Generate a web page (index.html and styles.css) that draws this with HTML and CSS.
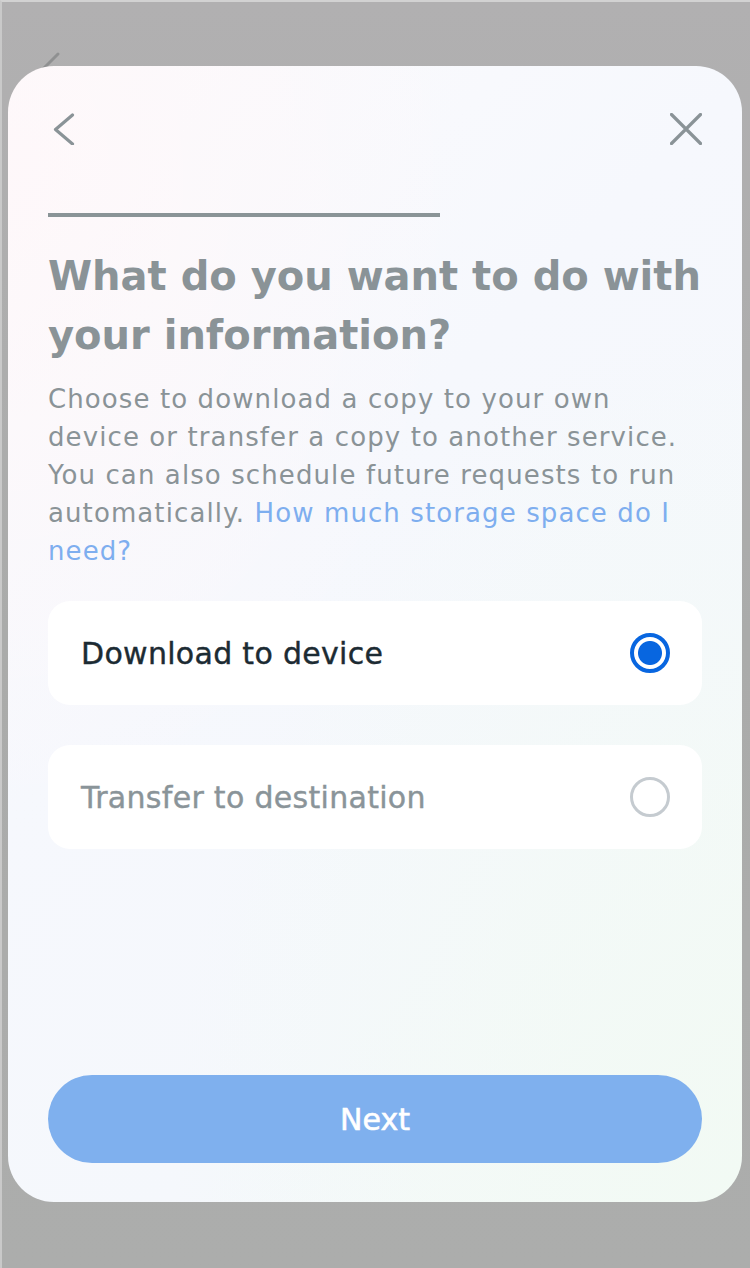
FILE: index.html
```html
<!DOCTYPE html>
<html lang="en">
<head>
<meta charset="utf-8">
<title>What do you want to do with your information?</title>
<link rel="stylesheet" href="styles.css">
</head>
<body>
<div class="backdrop">
  <svg class="under-back" width="40" height="40" viewBox="0 0 40 40" aria-hidden="true">
    <path d="M22 4 L6 20 L22 36" fill="none" stroke="#8f9091" stroke-width="3" stroke-linecap="round" stroke-linejoin="round"/>
  </svg>
  <section class="sheet">
    <header class="sheet-head">
      <button class="icon-btn" aria-label="Back">
        <svg width="32" height="32" viewBox="0 0 32 32">
          <path d="M24.5 2 L7.5 16.5 L24.5 31" fill="none" stroke="#8a9397" stroke-width="3.2" stroke-linecap="round" stroke-linejoin="round"/>
        </svg>
      </button>
      <button class="icon-btn" aria-label="Close">
        <svg width="32" height="32" viewBox="0 0 32 32">
          <path d="M1.5 1.5 L30.5 30.5 M30.5 1.5 L1.5 30.5" fill="none" stroke="#8a9397" stroke-width="3.2" stroke-linecap="round"/>
        </svg>
      </button>
    </header>
    <div class="progress"></div>
    <h1 class="title">What do you want to do with<br>your information?</h1>
    <p class="desc">Choose to download a copy to your own device or transfer a copy to another service. You can also schedule future requests to run automatically. <a class="link" href="#">How much storage space do I need?</a></p>
    <div class="options">
      <div class="option">
        <span class="option-label selected">Download to device</span>
        <span class="radio radio-on"></span>
      </div>
      <div class="option">
        <span class="option-label">Transfer to destination</span>
        <span class="radio"></span>
      </div>
    </div>
    <button class="next">Next</button>
  </section>
</div>
</body>
</html>
```
FILE: styles.css
```css
* { box-sizing: border-box; }
html, body { margin: 0; padding: 0; }
body {
  font-family: "DejaVu Sans", "Noto Sans", "Liberation Sans", sans-serif;
  width: 750px;
  height: 1268px;
  overflow: hidden;
}
.backdrop {
  position: relative;
  width: 750px;
  height: 1268px;
  background: linear-gradient(180deg, #b1b0b1 0%, #aaabaa 50%, #acadac 100%);
  border-top: 2px solid #d2d2d2;
  border-left: 2px solid #c9c9c9;
  padding: 64px 8px 0 6px;
}
.under-back {
  position: absolute;
  left: 34px;
  top: 48px;
}
.sheet {
  position: relative;
  height: 1136px;
  border-radius: 46px;
  background:
    radial-gradient(ellipse at 0% 10%, rgba(255, 247, 249, 0.8) 0%, rgba(255, 247, 249, 0) 45%),
    radial-gradient(ellipse at 100% 100%, rgba(242, 250, 244, 1) 0%, rgba(242, 250, 244, 0) 55%),
    linear-gradient(135deg, #fcfbfd 0%, #f6f8fd 40%, #f5f8fc 70%, #f4f9f7 100%);
  padding: 47px 40px 39px;
  display: flex;
  flex-direction: column;
}
.sheet-head {
  display: flex;
  justify-content: space-between;
  align-items: center;
  height: 32px;
}
.icon-btn {
  width: 32px;
  height: 32px;
  padding: 0;
  border: 0;
  background: none;
  display: flex;
}
.progress {
  margin-top: 68px;
  width: 392px;
  height: 4px;
  background: #8a9497;
}
.title {
  margin: 30px 0 0;
  font-size: 40px;
  line-height: 59px;
  font-weight: 700;
  color: #8a9397;
  white-space: nowrap;
}
.desc {
  margin: 15px 0 0;
  font-size: 26px;
  line-height: 38px;
  font-weight: 400;
  letter-spacing: 1.1px;
  color: #8a9397;
}
.link {
  color: #7eaeef;
  text-decoration: none;
}
.options {
  margin-top: 31px;
  display: flex;
  flex-direction: column;
  gap: 40px;
}
.option {
  height: 104px;
  border-radius: 22px;
  background: #ffffff;
  display: flex;
  align-items: center;
  justify-content: space-between;
  padding: 0 32px 0 33px;
}
.option-label {
  font-size: 30px;
  font-weight: 400;
  letter-spacing: 0.3px;
  -webkit-text-stroke: 0.4px currentColor;
  color: #8a9499;
}
.option-label.selected { color: #1c2b33; }
.radio {
  width: 40px;
  height: 40px;
  border-radius: 50%;
  border: 3.5px solid #c5cbd0;
  background: #ffffff;
}
.radio-on {
  border: 4px solid #0866e0;
  background: radial-gradient(circle, #0866e0 0 11.5px, #ffffff 12.5px);
}
.next {
  margin-top: auto;
  height: 88px;
  width: 100%;
  border: 0;
  border-radius: 44px;
  background: #7fb0ee;
  color: #ffffff;
  font-family: inherit;
  font-size: 30px;
  font-weight: 400;
  -webkit-text-stroke: 0.6px #ffffff;
}
```
